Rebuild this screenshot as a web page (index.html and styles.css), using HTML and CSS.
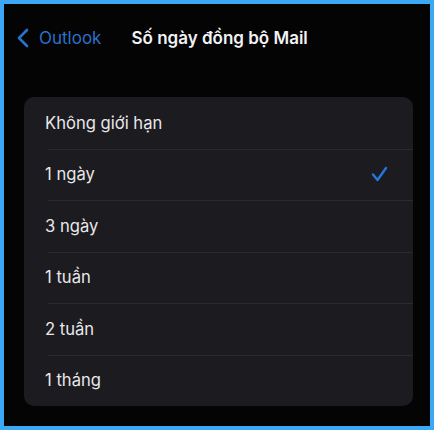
FILE: index.html
```html
<!DOCTYPE html>
<html lang="vi">
<head>
  <meta charset="UTF-8">
  <meta name="viewport" content="width=device-width, initial-scale=1.0">
  <title>Số ngày đồng bộ Mail</title>
  <link rel="stylesheet" href="styles.css">
</head>
<body>
  <div class="frame">
    <div class="navbar">
      <a class="back" href="#">
        <svg class="chevron" width="12" height="20" viewBox="0 0 12 20">
          <path d="M10 2 L2 10 L10 18" fill="none" stroke="currentColor" stroke-width="2.6" stroke-linecap="round" stroke-linejoin="round"/>
        </svg>
        <span>Outlook</span>
      </a>
      <h1 class="title">Số ngày đồng bộ Mail</h1>
    </div>
    <ul class="list">
      <li class="row">Không giới hạn</li>
      <li class="row selected">1 ngày
        <svg class="check" width="17" height="16" viewBox="0 0 17 16">
          <path d="M2 8.5 L6.5 14 L15 2" fill="none" stroke="currentColor" stroke-width="2.4" stroke-linecap="round" stroke-linejoin="round"/>
        </svg>
      </li>
      <li class="row">3 ngày</li>
      <li class="row">1 tuần</li>
      <li class="row">2 tuần</li>
      <li class="row">1 tháng</li>
    </ul>
  </div>
</body>
</html>
```

FILE: styles.css
```css
html, body {
  margin: 0;
  padding: 0;
  background: #3ba7f5;
}
.frame {
  box-sizing: border-box;
  width: 434px;
  height: 430px;
  border: 4px solid #3ba7f5;
  background: #040405;
  font-family: Inter, "Liberation Sans", sans-serif;
  color: #e8e8ea;
}
.navbar {
  display: flex;
  align-items: center;
  height: 67px;
  padding-left: 13px;
}
.back {
  display: flex;
  align-items: center;
  gap: 10px;
  color: #2a70cc;
  text-decoration: none;
  font-size: 17px;
}
.chevron {
  display: block;
}
.title {
  margin: 0 0 0 30px;
  font-size: 17px;
  font-weight: 600;
  color: #f2f2f4;
}
.list {
  list-style: none;
  margin: 26px 17px 0 20px;
  padding: 0;
  background: #1c1b1f;
  border-radius: 10px;
  overflow: hidden;
}
.row {
  display: flex;
  align-items: center;
  justify-content: space-between;
  height: 51.5px;
  padding: 0 25px 0 21px;
  font-size: 16.6px;
  position: relative;
}
.row + .row::before {
  content: "";
  position: absolute;
  top: 0;
  left: 24px;
  right: 0;
  border-top: 1px solid #2b2a2f;
}
.check {
  color: #2376dc;
}
```
